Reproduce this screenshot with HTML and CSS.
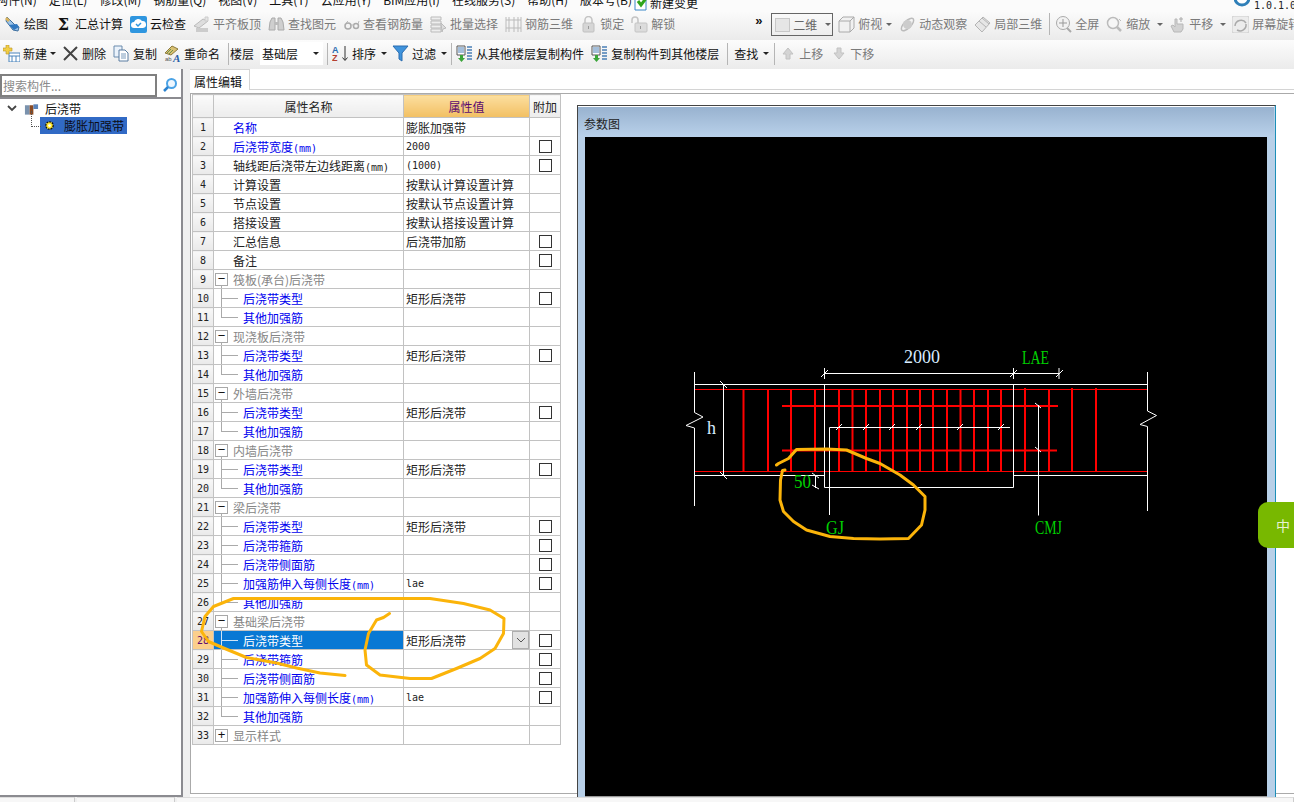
FILE: index.html
```html
<!DOCTYPE html>
<html lang="zh">
<head>
<meta charset="utf-8">
<title>属性编辑</title>
<link rel="stylesheet" href="styles.css">
</head>
<body>
<div class="app">
  <div class="menu">
    <div class="menu-items">
      <span class="first">构件(N)</span><span>定位(L)</span><span>修改(M)</span><span>钢筋量(Q)</span><span>视图(V)</span><span>工具(T)</span><span>云应用(Y)</span><span>BIM应用(I)</span><span>在线服务(S)</span><span>帮助(H)</span><span>版本号(B)</span>
      <span class="news"><svg class="ic-small" viewBox="0 0 16 16"><path d="M1 1h11v14H1z" fill="#fff" stroke="#3a87c8"/><path d="M4 6l3 4 6-8" fill="none" stroke="#2fa51c" stroke-width="3"/></svg>新建变更</span>
    </div>
    <div class="menu-right"><svg class="ic-small" viewBox="0 0 16 16"><circle cx="8" cy="3" r="7" fill="#fff" stroke="#2f7fb8" stroke-width="3"/></svg><span class="mono dark">1.0.1.0</span></div>
  </div>

  <div class="bar bar-a">
    <div class="t first-a"><svg class="ic" viewBox="0 0 17 17"><path d="M3 1l9 9 3 1-1 4-5-1-7-9z" fill="#9cc3e8" stroke="#3d6f9f"/><path d="M5 9l5 5 5-3-2-3z" fill="#2f77c0"/><path d="M1 3l2-2 3 3-2 2z" fill="#d9b25a"/></svg>绘图</div>
    <div class="t"><span class="ic sigma">Σ</span>汇总计算</div>
    <div class="t"><svg class="ic" viewBox="0 0 17 17"><rect x="0" y="0" width="17" height="17" rx="2" fill="#2f96df"/><path d="M4 12a3 3 0 0 1 0-6 4.500 4.500 0 0 1 8-1 3.500 3.500 0 0 1 1 7z" fill="#fff"/><path d="M6 8l2 2 3-3" fill="none" stroke="#2f96df" stroke-width="1.500"/></svg>云检查</div>
    <div class="t off"><svg class="ic" viewBox="0 0 17 17"><path d="M1 10l9-7 5 2-9 7z" fill="#ddd" stroke="#bbb"/><path d="M3 12h12v4H3z" fill="#ccc"/><path d="M12 1h3v4h-3z" fill="#e4e4e4" stroke="#ccc"/></svg>平齐板顶</div>
    <div class="t off"><svg class="ic" viewBox="0 0 17 17"><path d="M2 6l2-4h3v12H1zM15 6l-2-4h-3v12h6z" fill="#cfcfcf" stroke="#aaa"/><path d="M7 6h3v3H7z" fill="#bbb"/></svg>查找图元</div>
    <div class="t off"><svg class="ic" viewBox="0 0 17 17"><circle cx="5" cy="10" r="3" fill="none" stroke="#aaa" stroke-width="1.500"/><circle cx="13" cy="10" r="2.500" fill="none" stroke="#aaa" stroke-width="1.500"/><path d="M8 9h3M2 8l3-3M15 8l1-3" stroke="#bbb" fill="none"/></svg>查看钢筋量</div>
    <div class="t off"><svg class="ic" viewBox="0 0 17 17"><path d="M1 1h10v3H1zM1 5h10v3H1zM1 9h10v3H1zM1 13h10v3H1z" fill="#eee" stroke="#bbb"/><path d="M11 7l5 5-3 1-1 3z" fill="#ddd" stroke="#bbb"/></svg>批量选择</div>
    <div class="t off"><svg class="ic" viewBox="0 0 17 17"><path d="M1 4h15M1 12h15M4 1v15M9 1v15M13 1v15M1 1v15M16 1v15" stroke="#bbb" fill="none"/></svg>钢筋三维</div>
    <div class="t off"><svg class="ic" viewBox="0 0 17 17"><path d="M5 7V4a3.500 3.500 0 0 1 7 0v3" fill="none" stroke="#c4c4c4" stroke-width="1.500"/><rect x="3" y="7" width="11" height="9" rx="1" fill="#d6d6d6" stroke="#c0c0c0"/><path d="M8 10h1v3H8z" fill="#999"/></svg>锁定</div>
    <div class="t off"><svg class="ic" viewBox="0 0 17 17"><path d="M1 7V4a3 3 0 0 1 6 0v3" fill="none" stroke="#c4c4c4" stroke-width="1.500"/><rect x="4" y="7" width="12" height="9" rx="1" fill="#dcdcdc" stroke="#c4c4c4"/><path d="M9 10h1v3H9z" fill="#999"/></svg>解锁</div>
    <div class="more">»</div>
    <div class="combo-2d"><span class="sq"></span><span>二维</span><span class="arrow grey"></span></div>
    <div class="t off m-2"><svg class="ic" viewBox="0 0 17 17"><path d="M1 5l4-4h11v11l-4 4H1z" fill="#f1f1f1" stroke="#aaa"/><path d="M1 5h11v11M12 5l4-4" fill="none" stroke="#aaa"/></svg>俯视</div>
    <span class="arrow grey m-3"></span>
    <div class="t off"><svg class="ic" viewBox="0 0 17 17"><ellipse cx="8.500" cy="8.500" rx="8" ry="3.500" transform="rotate(-45 8.500 8.500)" fill="none" stroke="#bbb" stroke-width="1.500"/><circle cx="8.500" cy="8.500" r="4.500" fill="#ccc"/></svg>动态观察</div>
    <div class="t off"><svg class="ic" viewBox="0 0 17 17"><path d="M1 9l8-8 7 6-8 9z" fill="#e6e6e6" stroke="#b4b4b4"/><path d="M5 5l7 6M8 2l7 6" stroke="#b4b4b4"/></svg>局部三维</div>
    <span class="sep"></span>
    <div class="t off m-2"><svg class="ic" viewBox="0 0 17 17"><circle cx="8" cy="7" r="6.500" fill="#f2f2f2" stroke="#aaa"/><path d="M8 3v8M4 7h8" stroke="#999"/><path d="M12 12l4 4" stroke="#aaa" stroke-width="2"/></svg>全屏</div>
    <div class="t off"><svg class="ic" viewBox="0 0 17 17"><circle cx="7" cy="7" r="5.500" fill="#f6f6f6" stroke="#bbb" stroke-width="1.500"/><path d="M11 11l4 4" stroke="#bbb" stroke-width="2.500"/><path d="M13 3l2 2" stroke="#bbb"/></svg>缩放</div>
    <span class="arrow grey"></span>
    <div class="t off m-1"><svg class="ic" viewBox="0 0 17 17"><path d="M5 16l-3-6 2-1 2 2V3h2v5h6v5l-2 3z" fill="#d2d2d2" stroke="#b8b8b8"/><path d="M12 1v5M10 3h4" stroke="#aaa"/></svg>平移</div>
    <span class="arrow grey"></span>
    <div class="t off m-1"><svg class="ic" viewBox="0 0 17 17"><rect x="0" y="0" width="17" height="17" rx="2" fill="#ececec" stroke="#ccc"/><path d="M3 10a6 6 0 0 1 11-3M14 8a6 6 0 0 1-9 6" fill="none" stroke="#aaa" stroke-width="1.500"/></svg>屏幕旋转</div>
  </div>

  <div class="bar bar-b">
    <div class="t s3"><svg class="ic" viewBox="0 0 17 17"><rect x="6" y="8" width="11" height="9" fill="#fff" stroke="#4b84bc"/><path d="M6 11h11M9 11v6M13 11v6" stroke="#4b84bc"/><path d="M3 0h3v3h3v3H6v3H3V6H0V3h3z" fill="#f2cf45" stroke="#b8962a" stroke-width=".6"/></svg>新建</div>
    <span class="arrow s3"></span>
    <div class="t s6"><svg class="ic" viewBox="0 0 17 17"><path d="M2 2l13 13M15 2L2 15" stroke="#444" stroke-width="2"/></svg>删除</div>
    <div class="t s7"><svg class="ic" viewBox="0 0 17 17"><path d="M1 1h8v11H1z" fill="#eaf2fb" stroke="#6a8bad"/><path d="M6 5h6l3 3v8H6z" fill="#fff" stroke="#5a7da1"/><path d="M8 9h5M8 11h5M8 13h5" stroke="#7c9cbd"/></svg>复制</div>
    <div class="t s7"><svg class="ic" viewBox="0 0 17 17"><path d="M1 8l7-7 6 3-7 6z" fill="#d9c173" stroke="#8c7a3c"/><path d="M3 8l4-4M5 9l4-4" stroke="#6c8f4f"/><text x="1" y="16" class="svg-a">ab</text><text x="9" y="17" class="svg-big">A</text></svg>重命名</div>
    <span class="sep s8"></span>
    <div class="t s1">楼层</div>
    <div class="floor s6"><span>基础层</span><span class="arrow"></span></div>
    <span class="sep s4"></span>
    <div class="t s4"><svg class="ic" viewBox="0 0 17 17"><text x="0" y="7.500" class="svg-az blue">A</text><text x="0" y="16" class="svg-az red">Z</text><path d="M13 1v14M10.500 12.500l2.500 3 2.500-3" stroke="#333" fill="none"/></svg>排序</div>
    <span class="arrow s5"></span>
    <div class="t s5"><svg class="ic" viewBox="0 0 17 17"><path d="M1 1h15l-6 7v8l-3-2V8z" fill="#3f93dc" stroke="#2a6db0"/></svg>过滤</div>
    <span class="arrow s5"></span>
    <span class="sep s4"></span>
    <div class="t s4"><svg class="ic" viewBox="0 0 17 17"><path d="M1 1h8v9H1z" fill="#fff" stroke="#555"/><path d="M2 3h6M2 5h6M2 7h6" stroke="#4a7fb5"/><path d="M11 2h5M11 5h5M11 8h5M11 11h5M11 14h5" stroke="#4a7fb5" stroke-width="1.500"/><path d="M4 10h3v3h2l-3.500 4L2 13h2z" fill="#3ba53a"/></svg>从其他楼层复制构件</div>
    <div class="t s7"><svg class="ic" viewBox="0 0 17 17"><path d="M1 1h8v9H1z" fill="#fff" stroke="#555"/><path d="M2 3h6M2 5h6M2 7h6" stroke="#4a7fb5"/><path d="M11 2h5M11 5h5M11 8h5M11 11h5M11 14h5" stroke="#4a7fb5" stroke-width="1.500"/><path d="M4 10h3v3h2l-3.500 4L2 13h2z" fill="#3ba53a"/></svg>复制构件到其他楼层</div>
    <span class="sep s8"></span>
    <div class="t s6">查找</div>
    <span class="arrow s5"></span>
    <span class="sep s5"></span>
    <div class="t off s4"><svg class="ic" viewBox="0 0 17 17"><path d="M9 3l5 6h-3v5H7V9H4z" fill="#d4d4d4" stroke="#c2c2c2"/></svg>上移</div>
    <div class="t off s7"><svg class="ic" viewBox="0 0 17 17"><path d="M7 3h4v5h3l-5 6-5-6h3z" fill="#d4d4d4" stroke="#c2c2c2"/></svg>下移</div>
  </div>

  <div class="main">
    <aside class="side">
      <div class="search">
        <div class="search-box">搜索构件...</div>
        <svg class="search-ic" viewBox="0 0 16 16"><circle cx="9.500" cy="6.500" r="4.500" fill="#eef7ff" stroke="#4ba3e6" stroke-width="2"/><path d="M6 10l-4 4" stroke="#2b83cf" stroke-width="2.500"/></svg>
      </div>
      <div class="tree">
        <div class="node">
          <svg class="chev" viewBox="0 0 10 7"><path d="M1 1l4 4 4-4" fill="none" stroke="#444" stroke-width="1.800"/></svg>
          <svg class="node-ic" viewBox="0 0 16 14"><path d="M1 3h5v10H1z" fill="#7a92ad"/><path d="M6 3h4v10H6z" fill="#8a4a22"/><path d="M10 2h5v5h-5z" fill="#5b83b8"/></svg>
          <span>后浇带</span>
        </div>
        <div class="leaf">
          <span class="leaf-sel"><svg class="gear" viewBox="0 0 12 12"><circle cx="6" cy="6" r="4" fill="#ffe92e" stroke="#111" stroke-width="1.500" stroke-dasharray="2 1"/><circle cx="6" cy="6" r="1.500" fill="#fff"/></svg>膨胀加强带</span>
        </div>
      </div>
    </aside>
    <div class="gutter"></div>
    <section class="work">
      <div class="tabs"><div class="tab">属性编辑</div></div>
      <div class="frame">
        <table class="grid">
          <colgroup><col class="c1"><col class="c2"><col class="c3"><col class="c4"></colgroup>
          <thead><tr><th class="num"></th><th>属性名称</th><th class="val-h">属性值</th><th>附加</th></tr></thead>
          <tbody>
            <tr><td class="num">1</td><td class="name b">名称</td><td class="val">膨胀加强带</td><td></td></tr>
            <tr><td class="num">2</td><td class="name b">后浇带宽度<span class="mono">(mm)</span></td><td class="val mono">2000</td><td class="ck"><i></i></td></tr>
            <tr><td class="num">3</td><td class="name">轴线距后浇带左边线距离<span class="mono">(mm)</span></td><td class="val mono">(1000)</td><td class="ck"><i></i></td></tr>
            <tr><td class="num">4</td><td class="name">计算设置</td><td class="val">按默认计算设置计算</td><td></td></tr>
            <tr><td class="num">5</td><td class="name">节点设置</td><td class="val">按默认节点设置计算</td><td></td></tr>
            <tr><td class="num">6</td><td class="name">搭接设置</td><td class="val">按默认搭接设置计算</td><td></td></tr>
            <tr><td class="num">7</td><td class="name">汇总信息</td><td class="val">后浇带加筋</td><td class="ck"><i></i></td></tr>
            <tr><td class="num">8</td><td class="name">备注</td><td class="val"></td><td class="ck"><i></i></td></tr>
            <tr><td class="num">9</td><td class="group open"><span class="box">−</span>筏板(承台)后浇带</td><td></td><td></td></tr>
            <tr><td class="num">10</td><td class="child">后浇带类型</td><td class="val">矩形后浇带</td><td class="ck"><i></i></td></tr>
            <tr><td class="num">11</td><td class="child last">其他加强筋</td><td></td><td></td></tr>
            <tr><td class="num">12</td><td class="group open"><span class="box">−</span>现浇板后浇带</td><td></td><td></td></tr>
            <tr><td class="num">13</td><td class="child">后浇带类型</td><td class="val">矩形后浇带</td><td class="ck"><i></i></td></tr>
            <tr><td class="num">14</td><td class="child last">其他加强筋</td><td></td><td></td></tr>
            <tr><td class="num">15</td><td class="group open"><span class="box">−</span>外墙后浇带</td><td></td><td></td></tr>
            <tr><td class="num">16</td><td class="child">后浇带类型</td><td class="val">矩形后浇带</td><td class="ck"><i></i></td></tr>
            <tr><td class="num">17</td><td class="child last">其他加强筋</td><td></td><td></td></tr>
            <tr><td class="num">18</td><td class="group open"><span class="box">−</span>内墙后浇带</td><td></td><td></td></tr>
            <tr><td class="num">19</td><td class="child">后浇带类型</td><td class="val">矩形后浇带</td><td class="ck"><i></i></td></tr>
            <tr><td class="num">20</td><td class="child last">其他加强筋</td><td></td><td></td></tr>
            <tr><td class="num">21</td><td class="group open"><span class="box">−</span>梁后浇带</td><td></td><td></td></tr>
            <tr><td class="num">22</td><td class="child">后浇带类型</td><td class="val">矩形后浇带</td><td class="ck"><i></i></td></tr>
            <tr><td class="num">23</td><td class="child">后浇带箍筋</td><td></td><td class="ck"><i></i></td></tr>
            <tr><td class="num">24</td><td class="child">后浇带侧面筋</td><td></td><td class="ck"><i></i></td></tr>
            <tr><td class="num">25</td><td class="child">加强筋伸入每侧长度<span class="mono">(mm)</span></td><td class="val mono">lae</td><td class="ck"><i></i></td></tr>
            <tr><td class="num">26</td><td class="child last">其他加强筋</td><td></td><td></td></tr>
            <tr><td class="num">27</td><td class="group open"><span class="box">−</span>基础梁后浇带</td><td></td><td></td></tr>
            <tr><td class="num cur">28</td><td class="child sel">后浇带类型</td><td class="val dd">矩形后浇带<span class="dd-btn"><svg viewBox="0 0 10 6"><path d="M1 1l4 4 4-4" fill="none" stroke="#555"/></svg></span></td><td class="ck"><i></i></td></tr>
            <tr><td class="num">29</td><td class="child">后浇带箍筋</td><td></td><td class="ck"><i></i></td></tr>
            <tr><td class="num">30</td><td class="child">后浇带侧面筋</td><td></td><td class="ck"><i></i></td></tr>
            <tr><td class="num">31</td><td class="child">加强筋伸入每侧长度<span class="mono">(mm)</span></td><td class="val mono">lae</td><td class="ck"><i></i></td></tr>
            <tr><td class="num">32</td><td class="child last">其他加强筋</td><td></td><td></td></tr>
            <tr><td class="num">33</td><td class="group"><span class="box">+</span>显示样式</td><td></td><td></td></tr>
          </tbody>
        </table>
        <div class="win">
          <div class="win-title">参数图</div>
          <div class="win-body">
            <svg class="draw" viewBox="585 137 682 660">
              <g class="red-thin">
                <path d="M694 389.500H1147M694 471.500H1147"/>
              </g>
              <g class="red-thick">
                <path d="M782 406H1058M782 450.500H1057"/>
                <path d="M743.500 389V471M768 389V471M791 389V471M815 389V471M839 389V471M852.500 389V471M866 389V471M880 389V471M893 389V471M907 389V471M920 389V471M933 389V471M947 389V471M960.500 389V471M974 389V471M988 389V471M1001 389V471M1025 388V471M1049 389V471M1072 388V471M1096 388V471"/>
              </g>
              <g class="white">
                <path d="M694.500 372V412.500L703 417L686 425.500L694.500 428V506"/>
                <path d="M1147.500 372V411L1156.500 415.500L1140 424.500L1147.500 426.500V511"/>
                <path d="M694 384.500H1147.500M694 475.500H824.500M1013.500 475.500H1147.500"/>
                <path d="M723.500 384.500V475.500M824.500 384.500V487.500H1013.500V384.500"/>
                <path d="M824.500 373.500H1059.500M824.500 368V379M1013.500 368V379M1059 368V379"/>
                <path d="M829.500 515V427.500H1010M1038.500 405V515.500M815.500 475V488"/>
                <path d="M720 381L727 388M720 472L727 479M821 377L828 370M1010 377L1017 370M1056 377L1063 370M836 430L842 424M863 430L869 424M889 430L895 424M916 430L922 424M957 430L963 424M998 430L1004 424M1035 403L1041 408M1035 447L1041 452M812 473L819 478M812 485L819 489"/>
              </g>
              <text x="904" y="363" class="dim pale" textLength="36" lengthAdjust="spacingAndGlyphs">2000</text>
              <text x="1022" y="364" class="dim green" textLength="27" lengthAdjust="spacingAndGlyphs">LAE</text>
              <text x="707" y="434" class="dim pale" textLength="9" lengthAdjust="spacingAndGlyphs">h</text>
              <text x="794" y="488" class="dim green" textLength="17" lengthAdjust="spacingAndGlyphs">50</text>
              <text x="826" y="534" class="dim green" textLength="18" lengthAdjust="spacingAndGlyphs">GJ</text>
              <text x="1035" y="534" class="dim green" textLength="27" lengthAdjust="spacingAndGlyphs">CMJ</text>
            </svg>
          </div>
        </div>
      </div>
    </section>
  </div>
  <div class="status"><span></span><span></span><span></span></div>
</div>

<svg class="ink" viewBox="0 0 1294 802">
  <path d="M776.500 465L778.500 463.500L788.500 458.500L796.500 449.500L826.500 449L846.500 450L866.500 458.500L880 463.500L900 475L913.500 485L925 496.500L925 510L921.500 525L908.500 538.500L880 539L853.500 538.500L830 536.500L806.500 530L793.500 521.500L783.500 511.500L780 500L780.500 480L782.500 470.500L785 470"/>
  <path d="M345 675.500L320 673L296.500 668L276.500 663L246.500 657.500L223.500 648L208.500 641.500L201.500 631.500L205 616.500L213.500 606.500L233.500 598.500L280 598.500L346.500 598.500L430 598.500L463.500 603.500L490 610L504 618.500L503.500 633.500L495 648.500L480 658.500L456.500 668.500L431.500 678.500L410 678.500L380 675L366.500 665L365 650L368.500 633.500L376.500 620L383.500 617.500L389.500 613.500"/>
</svg>
<div class="float-tab">中</div>
</body>
</html>
```

FILE: styles.css
```css
* { box-sizing: border-box; }
html, body { margin: 0; padding: 0; }
body {
  width: 1294px;
  height: 802px;
  overflow: hidden;
  position: relative;
  background: #fff;
  color: #111;
  font: 12px/16px "Noto Sans CJK SC", "Noto Sans", sans-serif;
}
.mono { font-family: "DejaVu Sans Mono", "Liberation Mono", monospace; font-size: 10px; line-height: 10px; }
.app { display: flex; flex-direction: column; height: 802px; }

/* menu strip, cut by the top of the screen */
.menu { height: 11px; overflow: hidden; background: #fbfbfb; display: flex; justify-content: space-between; }
.menu-items { display: flex; gap: 12px; margin-top: -8px; padding-left: 0; white-space: nowrap; }
.menu-items .first { margin-left: -4px; }
.menu-items .news { display: flex; align-items: flex-end; gap: 0; margin-left: -10px; }
.menu-right { display: flex; gap: 4px; margin-top: -8px; width: 60px; align-items: flex-end; }
.ic-small { width: 16px; height: 16px; flex: none; }
.dark { color: #222; }

/* toolbars */
.bar { display: flex; align-items: center; height: 29px; padding-bottom: 3px; white-space: nowrap; overflow: hidden; flex: none; }
.bar-a { gap: 7px; padding-left: 4px; background: linear-gradient(#fbfbfb, #ebebeb); }
.bar-b { padding-left: 3px; padding-bottom: 2px; background: linear-gradient(#fcfcfc, #ebebeb); }
.t { display: flex; align-items: center; gap: 3px; flex: none; }
.off { color: #7a7a7a; }
.ic { width: 17px; height: 17px; flex: none; display: block; }
.sigma { font: bold 16px/17px "DejaVu Serif", "Liberation Serif", serif; text-align: center; color: #111; }
.arrow { flex: none; width: 6px; height: 3px; border-style: solid; border-width: 3px 3px 0; border-color: #222 transparent transparent; }
.arrow.grey { border-top-color: #666; }
.sep { flex: none; width: 1px; height: 22px; background: #b5b5b5; }
.more { flex: none; width: 9px; margin-left: 73px; margin-top: -8px; font: bold 13px/13px "Liberation Sans", sans-serif; }
.combo-2d { flex: none; width: 62px; height: 23px; border: 1px solid #666; display: flex; align-items: center; padding-left: 3px; color: #666; margin-top: 1px; }
.combo-2d .sq { width: 15px; height: 14px; margin-right: 3px; background: #e6e6e6; border: 1px solid #c8c8c8; }
.combo-2d .arrow { margin-left: 8px; }
.m-3 { margin-left: -3px; }
.m-2 { margin-left: -2px; }
.m-1 { margin-left: -1px; }
.s1 { margin-left: 1px; }
.s3 { margin-left: 3px; }
.s4 { margin-left: 4px; }
.s5 { margin-left: 5px; }
.s6 { margin-left: 6px; }
.s7 { margin-left: 7px; }
.s8 { margin-left: 8px; }
.bar-b .t:first-child { margin-left: 0; }
.floor { flex: none; width: 63px; height: 23px; background: #fff; display: flex; align-items: center; justify-content: space-between; padding: 0 4px 0 2px; }
.svg-a { font: 6px "Liberation Sans", sans-serif; fill: #555; }
.svg-big { font: italic bold 11px "Liberation Serif", serif; fill: #2a5fa8; }
.svg-az { font: bold 9px "Liberation Sans", sans-serif; }
.blue { fill: #2a6db0; }
.red { fill: #b5402f; }

/* main */
.main { display: flex; height: 728px; flex: none; background: #fff; }
.side { width: 183px; flex: none; padding-top: 5px; border-right: 2px solid #8b8b90; border-bottom: 2px solid #8b8b90; }
.search { display: flex; align-items: center; height: 25px; border-bottom: 2px solid #8b8b90; padding-bottom: 1px; }
.search-box { width: 157px; height: 23px; border: 2px solid #808080; padding-left: 1px; color: #8a8a8a; line-height: 19px; font-size: 12px; }
.search-ic { width: 16px; height: 16px; margin-left: 5px; }
.tree { position: relative; padding-top: 1px; }
.node { display: flex; align-items: center; height: 17px; }
.chev { width: 10px; height: 7px; margin-left: 7px; }
.node-ic { width: 15px; height: 14px; margin-left: 7px; }
.node span { margin-left: 6px; color: #111; }
.leaf { height: 17px; padding-left: 40px; position: relative; }
.leaf::before { content: ""; position: absolute; left: 31px; top: -6px; width: 9px; height: 15px; border-left: 1px dotted #555; border-bottom: 1px dotted #555; }
.leaf-sel { display: flex; align-items: center; width: 87px; height: 17px; background: #316ac5; padding-left: 4px; color: #0c0c14; }
.gear { width: 11px; height: 11px; margin-right: 9px; flex: none; }
.gutter { width: 7px; flex: none; background: #f0f0f0; }
.work { flex: 1; min-width: 0; display: flex; flex-direction: column; }
.tabs { height: 21px; flex: none; border-bottom: 1px solid #d4d4d4; padding-left: 0; margin-top: 0; }
.tab { width: 60px; height: 21px; padding: 3px 0 0 4px; background: #fff; border: 1px solid #d4d4d4; border-width: 1px 1px 0 0; line-height: 17px; }
.frame { margin-top: 3px; flex: none; height: 701px; display: flex; align-items: flex-start; padding-left: 1px; border: 1px solid #aaa; border-right: 0; }

/* property grid */
.grid { border-collapse: collapse; table-layout: fixed; width: 368px; background: #fff; flex: none; }
.c1 { width: 21px; }
.c2 { width: 190px; }
.c3 { width: 126px; }
.c4 { width: 31px; }
.grid tbody tr { height: 19px; }
.grid th, .grid td { border: 1px solid #c2c2c2; padding: 1px 0 0; height: 19px; line-height: 14px; font-weight: normal; white-space: nowrap; overflow: hidden; position: relative; }
.grid thead th { height: 23px; background: linear-gradient(#fbfbfb, #ececec); text-align: center; color: #222; }
.grid thead .val-h { background: linear-gradient(#fcdf9f, #f2bf62); color: #5b0a6f; }
.num { background: linear-gradient(#f8f8f8, #e9e9e9); text-align: center; color: #222; }
.grid td.num { font: 10px/14px "DejaVu Sans Mono", "Liberation Mono", monospace; }
.num.cur { background: #fbcf8c; color: #5b0a6f; }
.grid .cur { background: #fbcf8c; }
.name { padding-left: 19px !important; color: #222; }
.name.b, .child { color: #0000ee; }
.val { padding-left: 2px !important; color: #222; }
.group { color: #868686; padding-left: 1px !important; }
.box { display: inline-block; vertical-align: top; width: 13px; height: 13px; margin: 0 5px 0 0; border: 1px solid #a8a8a8; background: #fff; color: #111; font: 13px/10px "Liberation Sans", sans-serif; text-align: center; }
.group.open::after { content: ""; position: absolute; left: 7px; top: 15px; bottom: -1px; width: 1px; background: #aaa; }
.child { padding-left: 29px !important; }
.child::before { content: ""; position: absolute; left: 7px; top: 0; bottom: 0; width: 1px; background: #aaa; }
.child.last::before { bottom: 50%; }
.child::after { content: ""; position: absolute; left: 7px; top: 50%; width: 17px; height: 1px; background: #aaa; }
.child.sel { background: #0878d4; color: #fff; }
.child.sel::before, .child.sel::after { background: #cfe4f7; }
.ck { text-align: center; }
.ck i { display: block; width: 13px; height: 13px; margin: 0 auto; border: 1px solid #333; background: #fff; }
.dd-btn { position: absolute; right: 0; top: 0; width: 17px; height: 18px; background: #e2e2e2; border: 1px solid #aeaeae; display: flex; align-items: center; justify-content: center; }
.dd-btn svg { width: 10px; height: 6px; }

/* parameter window */
.win { margin: 11px 0 0 16px; width: 699px; height: 692px; flex: none; border: 1px solid #444; border-bottom: 0; border-right-color: #1c8fb8; background: #b8d0e8; padding: 0 8px 0 7px; }
.win-title { height: 31px; margin: 0 -7px 0 -7px; padding: 9px 0 0 6px; background: linear-gradient(#98b2cf, #b9d1ea); line-height: 16px; color: #222; border-top: 1px solid #fff; }
.win-body { height: 660px; background: #000; border-bottom: 1px solid #999; }
.draw { display: block; width: 682px; height: 660px; }
.red-thin path { stroke: #f00; fill: none; stroke-width: 1; }
.red-thick path { stroke: #f00; fill: none; stroke-width: 2; }
.white path { stroke: #fff; fill: none; stroke-width: 1; }
.dim { font: 18px "Liberation Serif", serif; }
.pale { fill: #d8ecff; }
.green { fill: #00d000; }

/* status */
.status { height: 5px; flex: none; background: #f0f0f0; display: flex; gap: 2px; padding-left: 0; }
.status span { height: 5px; background: #f7f7f7; border-top: 1px solid #ddd; border-right: 1px solid #ccc; }
.status span:nth-child(1) { width: 75px; }
.status span:nth-child(2) { width: 98px; }
.status span:nth-child(3) { flex: 1; }

/* overlays */
.ink { position: absolute; left: 0; top: 0; width: 1294px; height: 802px; pointer-events: none; }
.ink path { fill: none; stroke: #fbb40a; stroke-width: 3; stroke-linecap: round; stroke-linejoin: round; }
.float-tab { position: absolute; left: 1258px; top: 502px; width: 36px; height: 46px; background: #78b800; border-radius: 10px 0 0 10px; color: #e8f2d0; font-size: 14px; line-height: 46px; padding-left: 18px; }
```
